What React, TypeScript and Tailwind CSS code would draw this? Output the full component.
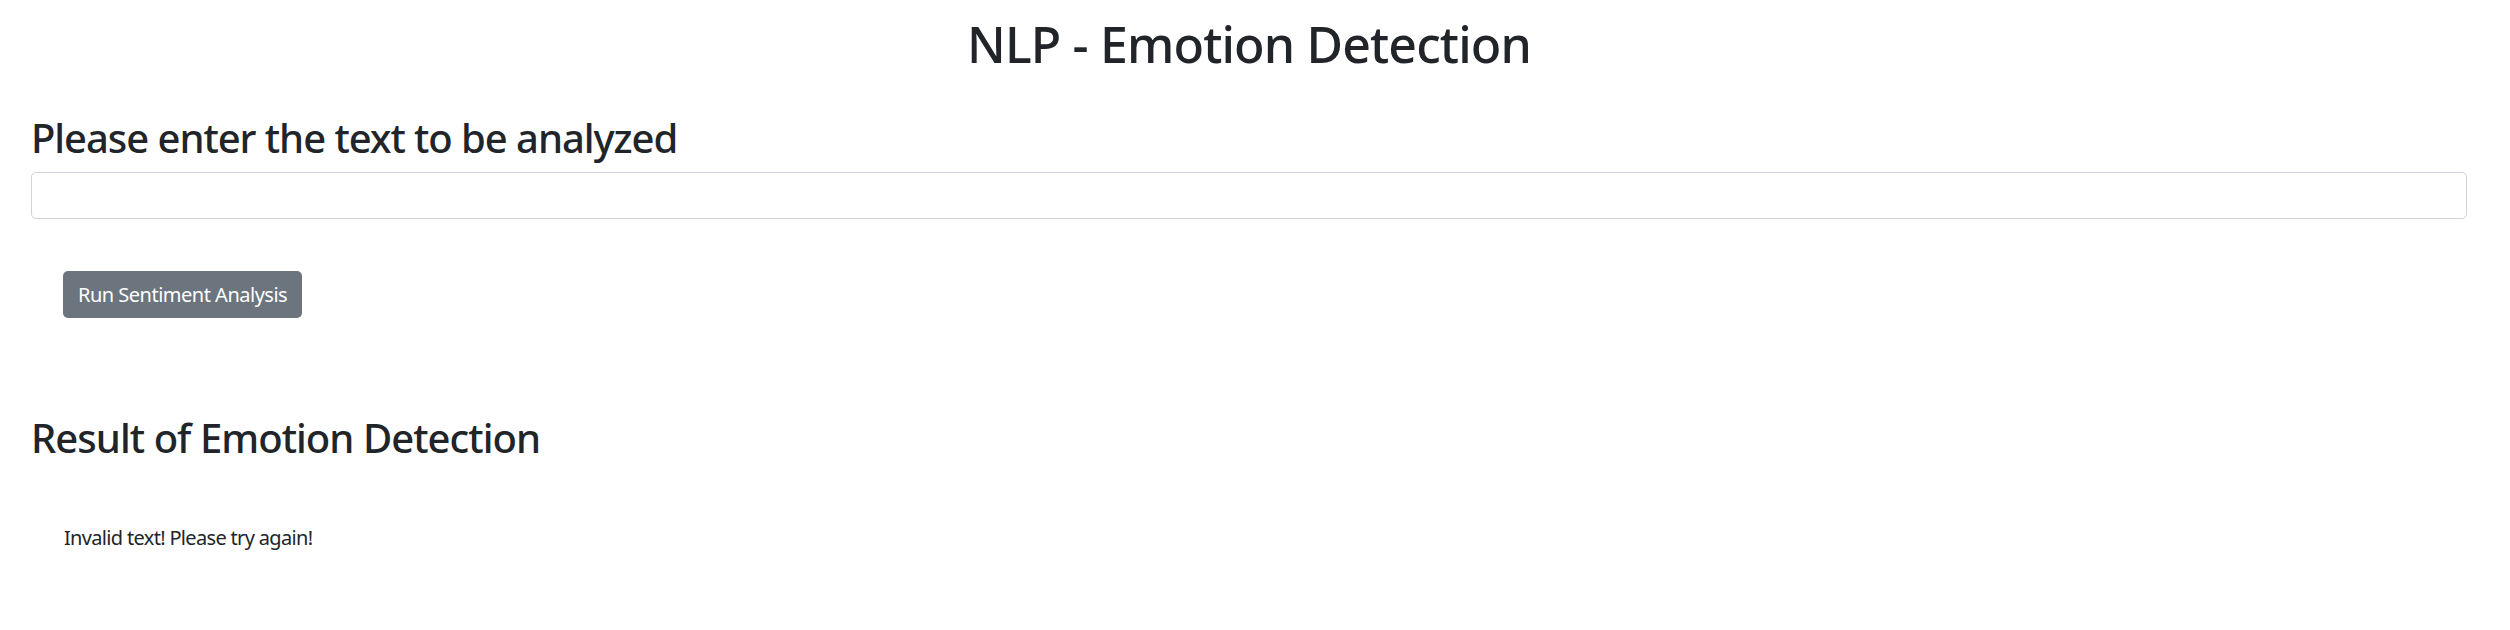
export default function App() {
  return (
    <div className="min-h-screen bg-white text-[#212529] font-['Noto_Sans',sans-serif]">
      {/* Page title */}
      <h1 className="pt-[14px] pr-[12px] text-center text-[50px] leading-[60px] font-medium tracking-[-0.85px]">
        NLP - Emotion Detection
      </h1>

      {/* Input form */}
      <div className="ml-[31px] mr-[43px]">
        <h2 className="mt-[40px] text-[40px] leading-[48px] font-medium tracking-[-1.05px]">
          Please enter the text to be analyzed
        </h2>
        <input
          type="text"
          className="mt-[10px] block w-full h-[47px] rounded-[5px] border border-[#ced4da] bg-white px-[15px] text-[20px] outline-none"
        />
        <div className="pl-[32px]">
          <button className="mt-[52px] h-[47px] px-[15px] rounded-[5px] bg-[#6c757d] text-[20px] leading-[30px] text-white tracking-[-0.5px]">
            Run Sentiment Analysis
          </button>
        </div>

        {/* Result */}
        <h2 className="mt-[96px] text-[40px] leading-[48px] font-medium tracking-[-0.95px]">
          Result of Emotion Detection
        </h2>
        <p className="mt-[61px] pl-[33px] text-[20px] leading-[30px] tracking-[-0.67px]">
          Invalid text! Please try again!
        </p>
      </div>
    </div>
  );
}
